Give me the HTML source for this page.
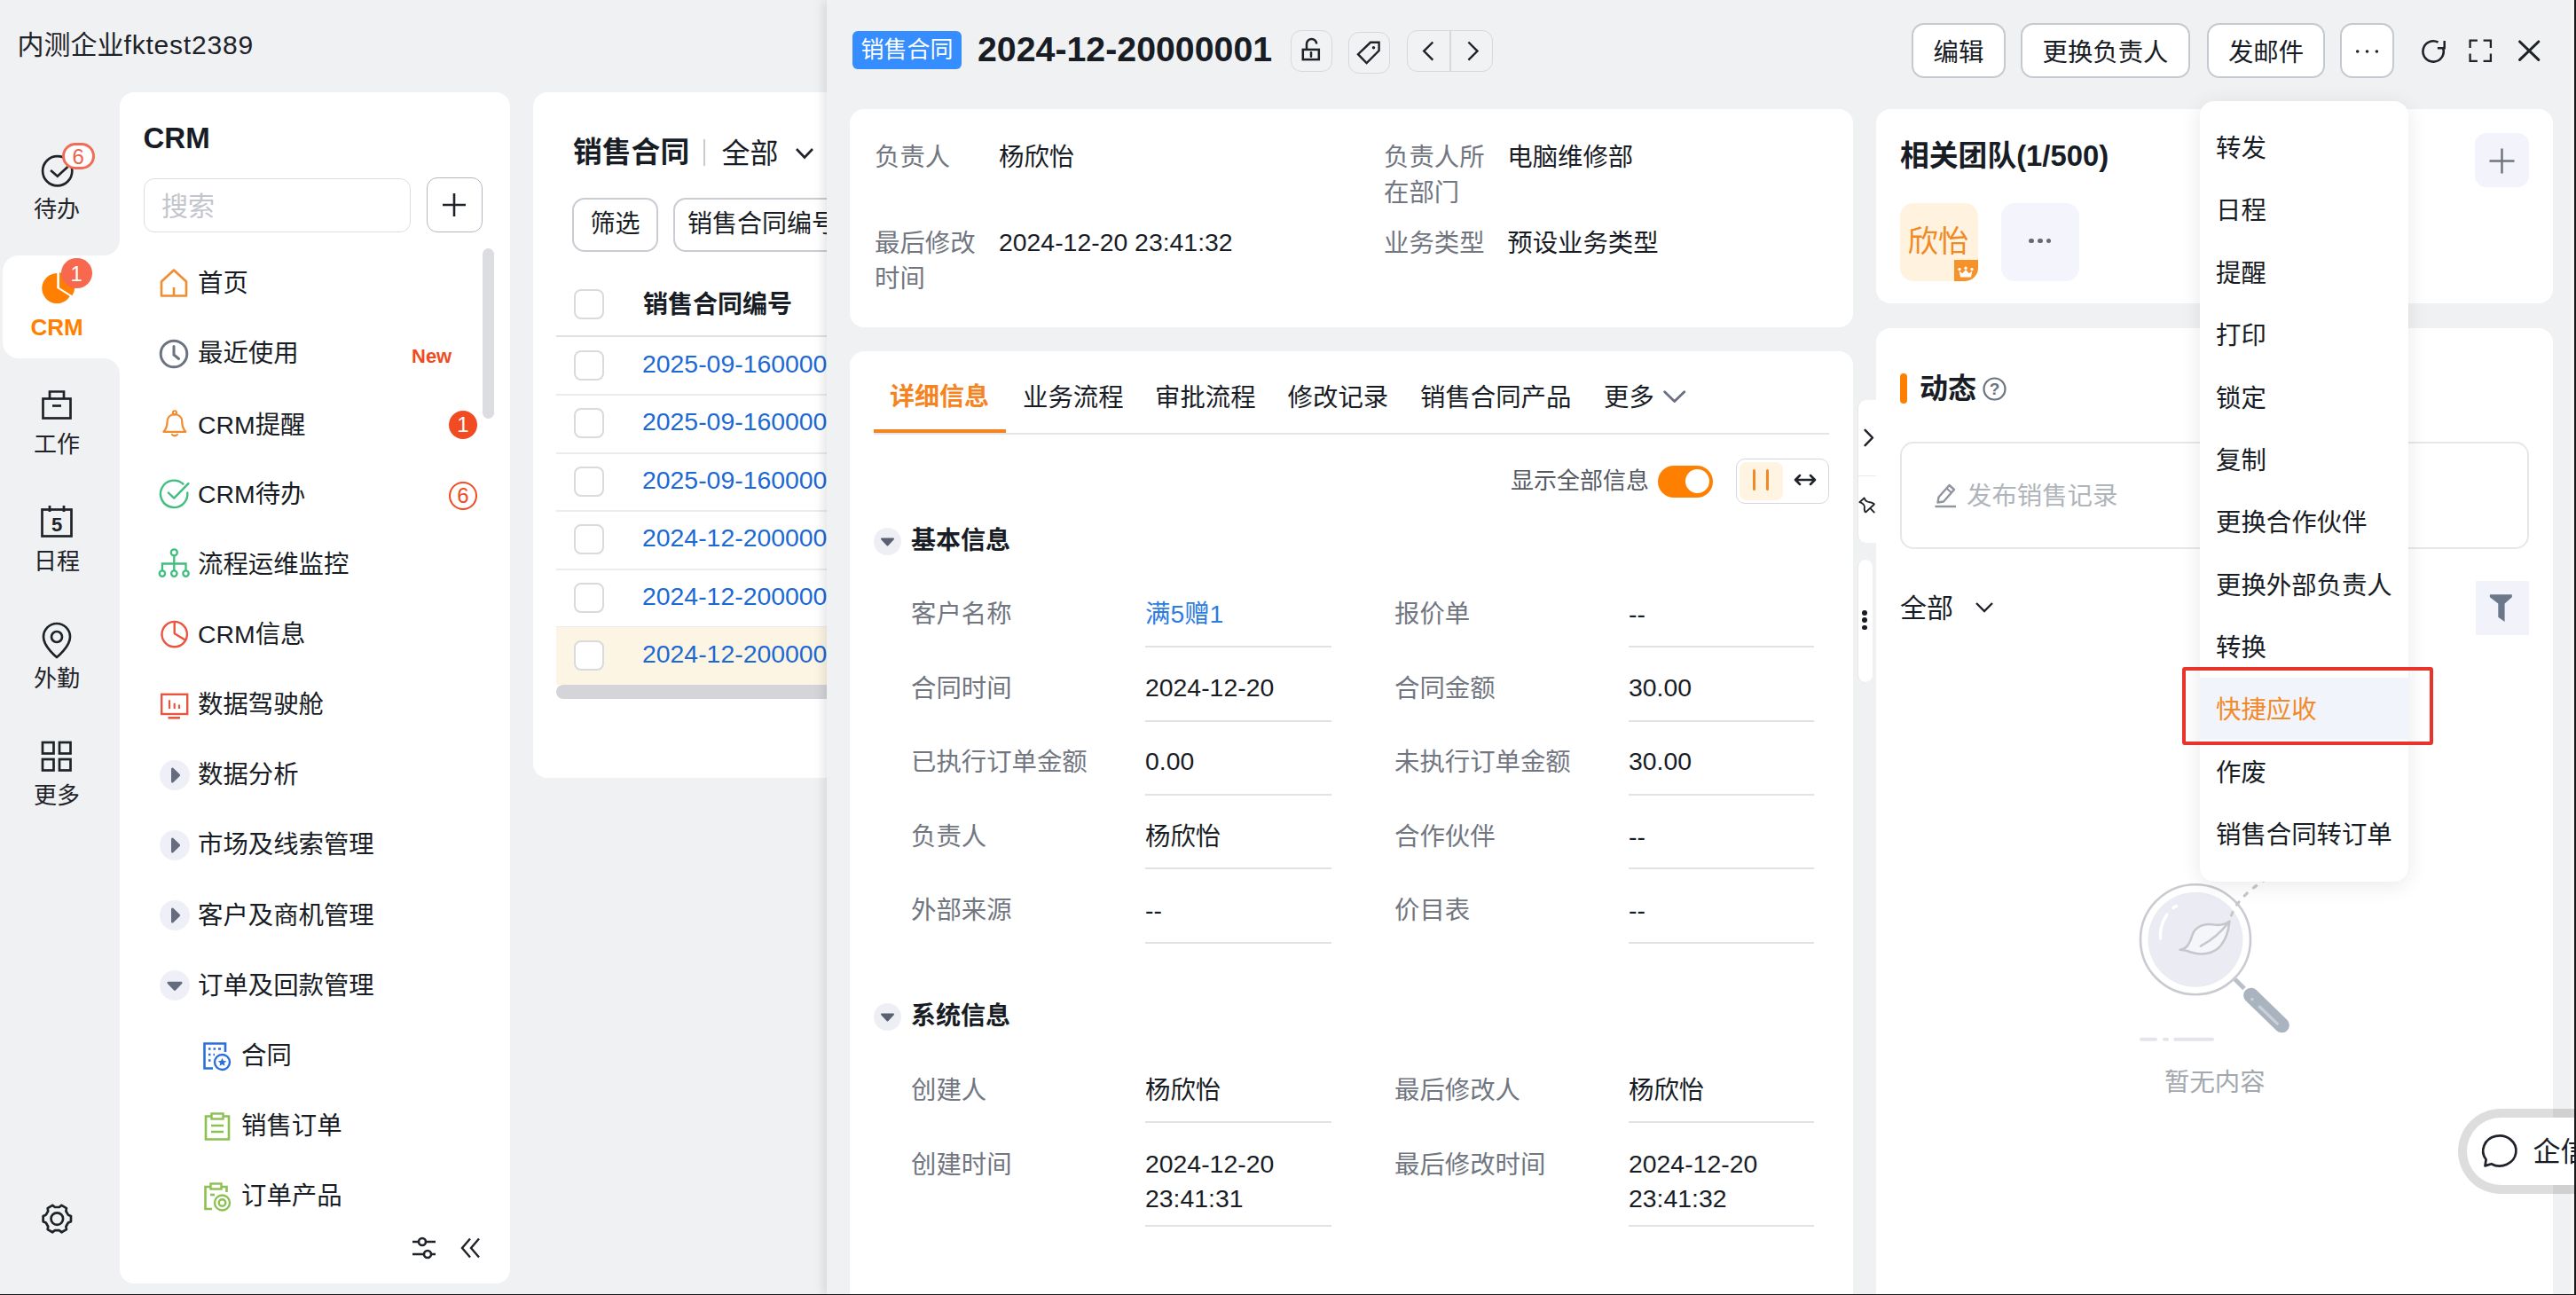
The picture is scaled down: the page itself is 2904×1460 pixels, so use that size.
<!DOCTYPE html><html lang="zh-CN"><head><meta charset="utf-8"><title>CRM</title><style>
*{box-sizing:border-box;margin:0;padding:0}
html,body{width:2904px;height:1460px;overflow:hidden}
body{position:relative;background:#f0f1f2;font-family:"Liberation Sans","Noto Sans CJK SC",sans-serif;color:#181c25;font-size:28px;line-height:40px}
.a{position:absolute}
.t{position:absolute;white-space:nowrap;line-height:40px;height:40px}
.b{font-weight:700}
.card{position:absolute;background:#fff;border-radius:16px}
.btn{position:absolute;border:2px solid #c9ccd2;border-radius:14px;background:#f6f7f9;text-align:center;white-space:nowrap}
svg{position:absolute;overflow:visible}
.cb{position:absolute;width:34px;height:34px;border:2px solid #d8dade;border-radius:8px;background:#fff}
.ul{position:absolute;height:2px;background:#e2e4e8}
.g{color:#868b95}
@media (max-width:1600px){html{zoom:.5}}
</style></head><body>
<div class="t " style="left:19.5px;top:31px;font-size:30px;color:#1f2329;">内测企业<span style="letter-spacing:0.8px">fktest2389</span></div>
<div class="a" style="left:3px;top:287.5px;width:160px;height:116px;background:#fff;border-radius:18px 0 0 18px"></div>
<div class="a" style="left:115px;top:267.5px;width:20px;height:20px;background:#fff"></div>
<div class="a" style="left:115px;top:267.5px;width:20px;height:20px;background:#f0f1f2;border-bottom-right-radius:18px"></div>
<div class="a" style="left:115px;top:403.5px;width:20px;height:20px;background:#fff"></div>
<div class="a" style="left:115px;top:403.5px;width:20px;height:20px;background:#f0f1f2;border-top-right-radius:18px"></div>
<svg style="left:44px;top:173px;" width="40" height="40" viewBox="0 0 40 40" fill="none"><circle cx="20.7" cy="19.7" r="16.6" stroke="#1f2329" stroke-width="2.7"/><path d="M13.1 19 L20.8 25.7 L32.4 14.9" stroke="#1f2329" stroke-width="2.7"/></svg>
<div class="a" style="left:69.5px;top:160.5px;width:37.5px;height:30.5px;border:3.3px solid #f26b57;border-radius:16px;background:#fff;color:#f0624c;font-size:24px;line-height:25px;text-align:center">6</div>
<div class="t " style="left:-86.0px;width:300px;text-align:center;top:216px;font-size:26px;color:#1f2329;">待办</div>
<svg style="left:44px;top:304px;" width="44" height="44" viewBox="0 0 44 44" fill="none"><path d="M20.3 21.1 L20.3 4.100000000000001 A17.0 17.0 0 1 0 34.72 30.11 Z" fill="#ff8000"/><path d="M23.0 20.200000000000003 L23.0 3.200000000000003 A17.0 17.0 0 0 1 37.42 29.21 Z" fill="#ff8000"/></svg>
<div class="a" style="left:69px;top:290.5px;width:34.6px;height:34.6px;border-radius:18px;background:#f8684e;color:#fff;font-size:24px;line-height:35px;text-align:center">1</div>
<div class="t b" style="left:-86.0px;width:300px;text-align:center;top:348.5px;font-size:26px;color:#ff8000;">CRM</div>
<svg style="left:44px;top:436px;" width="40" height="40" viewBox="0 0 40 40" fill="none"><rect x="4.5" y="13.5" width="31" height="22" stroke="#1f2329" stroke-width="2.7"/><path d="M12 13 V5.5 H28 V13" stroke="#1f2329" stroke-width="2.7"/><path d="M15 21.5 H25" stroke="#1f2329" stroke-width="2.7"/></svg>
<div class="t " style="left:-86.0px;width:300px;text-align:center;top:481px;font-size:26px;color:#1f2329;">工作</div>
<svg style="left:44px;top:568px;" width="40" height="40" viewBox="0 0 40 40" fill="none"><rect x="3.5" y="6.5" width="33" height="30" stroke="#1f2329" stroke-width="2.7"/><path d="M12 2 V9 M28 2 V9" stroke="#1f2329" stroke-width="2.7"/><text x="20" y="31" font-size="22" font-weight="700" text-anchor="middle" fill="#1f2329" font-family="Liberation Sans, sans-serif">5</text></svg>
<div class="t " style="left:-86.0px;width:300px;text-align:center;top:612.5px;font-size:26px;color:#1f2329;">日程</div>
<svg style="left:44px;top:700px;" width="40" height="44" viewBox="0 0 40 44" fill="none"><path d="M20 41 C20 41 35 29 35 18 A15 15 0 0 0 5 18 C5 29 20 41 20 41 Z" stroke="#1f2329" stroke-width="2.7" stroke-linejoin="round"/><circle cx="20" cy="18" r="6" stroke="#1f2329" stroke-width="2.7"/></svg>
<div class="t " style="left:-86.0px;width:300px;text-align:center;top:744.5px;font-size:26px;color:#1f2329;">外勤</div>
<svg style="left:46px;top:835px;" width="36" height="36" viewBox="0 0 36 36" fill="none"><rect x="2" y="2" width="12.5" height="12.5" stroke="#1f2329" stroke-width="2.7"/><rect x="21" y="2" width="12.5" height="12.5" stroke="#1f2329" stroke-width="2.7"/><rect x="2" y="21" width="12.5" height="12.5" stroke="#1f2329" stroke-width="2.7"/><rect x="21" y="21" width="12.5" height="12.5" stroke="#1f2329" stroke-width="2.7"/></svg>
<div class="t " style="left:-86.0px;width:300px;text-align:center;top:877px;font-size:26px;color:#1f2329;">更多</div>
<svg style="left:40px;top:1350px" width="50" height="50" viewBox="40 1350 50 50" fill="none" stroke="#1f2329" stroke-width="2.7"><path d="M76.84 1369.66 L79.98 1370.92 L79.98 1377.28 L76.84 1378.54 L74.41 1382.74 L74.89 1386.09 L69.39 1389.27 L66.73 1387.18 L61.87 1387.18 L59.21 1389.27 L53.71 1386.09 L54.19 1382.74 L51.76 1378.54 L48.62 1377.28 L48.62 1370.92 L51.76 1369.66 L54.19 1365.46 L53.71 1362.11 L59.21 1358.93 L61.87 1361.02 L66.73 1361.02 L69.39 1358.93 L74.89 1362.11 L74.41 1365.46Z" stroke-linejoin="round"/><circle cx="64.3" cy="1374.1" r="6.8"/></svg>
<div class="card" style="left:135px;top:104px;width:440px;height:1343px"></div>
<div class="t b" style="left:161.5px;top:136.3px;font-size:33px;color:#181c25;">CRM</div>
<div class="a" style="left:161.5px;top:201.3px;width:301px;height:60.3px;border:1.8px solid #dcdde1;border-radius:12px;background:#fff"></div>
<div class="t " style="left:182px;top:213px;font-size:30px;color:#c2c5cb;">搜索</div>
<div class="a" style="left:481px;top:200px;width:63px;height:62px;border:1.8px solid #b4b7c0;border-radius:12px;background:#fff"></div>
<svg style="left:498px;top:217px;" width="28" height="28" viewBox="0 0 28 28" fill="none"><path d="M14 1 V27 M1 14 H27" stroke="#1f2329" stroke-width="2.6"/></svg>
<div class="a" style="left:544px;top:280px;width:13px;height:192px;background:#dcdde1;border-radius:7px"></div>
<svg style="left:179px;top:302px;" width="34" height="34" viewBox="0 0 34 34" fill="none"><path d="M3 15.5 L17 2.5 L31 15.5 V31.5 H3 Z" stroke="#f28c2e" stroke-width="2.6" stroke-linejoin="round"/><path d="M17 22 V31" stroke="#f28c2e" stroke-width="2.6"/></svg>
<div class="t " style="left:223px;top:298.8px;font-size:28.4px;color:#181c25;">首页</div>
<svg style="left:179px;top:382px;" width="34" height="34" viewBox="0 0 34 34" fill="none"><circle cx="17" cy="17" r="14.8" stroke="#6b7380" stroke-width="3"/><path d="M17 8.5 V18 L22.5 22.5" stroke="#6b7380" stroke-width="3" stroke-linecap="round"/></svg>
<div class="t " style="left:223px;top:378.0px;font-size:28.4px;color:#181c25;">最近使用</div>
<svg style="left:179px;top:461px;" width="36" height="34" viewBox="0 0 36 34" fill="none"><circle cx="17.9" cy="4.3" r="2.1" stroke="#f28c2e" stroke-width="2"/><path d="M5.5 25.8 H30.3 C27.8 23 26.3 20 26.3 15 C26.3 9.5 22.8 6.2 17.9 6.2 C13 6.2 9.5 9.5 9.5 15 C9.5 20 8 23 5.5 25.8 Z" stroke="#f28c2e" stroke-width="2.3" stroke-linejoin="round"/><path d="M15 29 Q17.9 31.6 20.8 29" stroke="#f28c2e" stroke-width="2.3" stroke-linecap="round"/></svg>
<div class="t " style="left:223px;top:458.6px;font-size:28.4px;color:#181c25;">CRM提醒</div>
<svg style="left:179px;top:540px;" width="36" height="34" viewBox="0 0 36 34" fill="none"><path d="M27.4 5.6 A15.2 15.2 0 1 0 32.3 15.4" stroke="#3fbf7f" stroke-width="2.4" stroke-linecap="round"/><path d="M10.8 15.5 L17.2 21.7 L33.4 5.2" stroke="#3fbf7f" stroke-width="2.4" stroke-linecap="round" stroke-linejoin="round"/></svg>
<div class="t " style="left:223px;top:537.1000000000001px;font-size:28.4px;color:#181c25;">CRM待办</div>
<svg style="left:179px;top:619px;" width="36" height="34" viewBox="0 0 36 34" fill="none"><circle cx="17.3" cy="3.9" r="3.5" stroke="#3fbf7f" stroke-width="2.3"/><circle cx="3.9" cy="27.6" r="3.2" stroke="#3fbf7f" stroke-width="2.3"/><circle cx="17.3" cy="27.6" r="3.2" stroke="#3fbf7f" stroke-width="2.3"/><circle cx="30.5" cy="27.6" r="3.2" stroke="#3fbf7f" stroke-width="2.3"/><path d="M17.3 7.6 V24.2 M3.9 24.2 V16.5 H30.5 V24.2" stroke="#3fbf7f" stroke-width="2.3"/></svg>
<div class="t " style="left:223px;top:615.6px;font-size:28.4px;color:#181c25;">流程运维监控</div>
<svg style="left:179px;top:698px;" width="36" height="34" viewBox="0 0 36 34" fill="none"><circle cx="17.7" cy="17.1" r="14.2" stroke="#ea553f" stroke-width="2.4"/><path d="M17.7 3 V16.2 L29.8 23.6" stroke="#ea553f" stroke-width="2.4" stroke-linejoin="round"/></svg>
<div class="t " style="left:223px;top:694.8px;font-size:28.4px;color:#181c25;">CRM信息</div>
<svg style="left:179px;top:778px;" width="36" height="34" viewBox="0 0 36 34" fill="none"><rect x="3.2" y="4.8" width="29" height="22.2" stroke="#ea553f" stroke-width="2.4"/><path d="M12 11.2 V21 M17.7 14.8 V21 M23 16.6 V21" stroke="#ea553f" stroke-width="2.2"/><path d="M10.5 31.3 H24" stroke="#ea553f" stroke-width="2.6"/></svg>
<div class="t " style="left:223px;top:774.0px;font-size:28.4px;color:#181c25;">数据驾驶舱</div>
<div class="a" style="left:180px;top:856.7px;width:34px;height:34px;background:#eff0f7;border-radius:17px"></div>
<svg style="left:180px;top:856.7px;" width="34" height="34" viewBox="0 0 34 34" fill="none"><path d="M14.3 9.8 V24.2 L21.8 17 Z" fill="#666c80" stroke="#666c80" stroke-width="2.6" stroke-linejoin="round"/></svg>
<div class="t " style="left:223px;top:853.2px;font-size:28.4px;color:#181c25;">数据分析</div>
<div class="a" style="left:180px;top:935.9000000000001px;width:34px;height:34px;background:#eff0f7;border-radius:17px"></div>
<svg style="left:180px;top:935.9000000000001px;" width="34" height="34" viewBox="0 0 34 34" fill="none"><path d="M14.3 9.8 V24.2 L21.8 17 Z" fill="#666c80" stroke="#666c80" stroke-width="2.6" stroke-linejoin="round"/></svg>
<div class="t " style="left:223px;top:932.4000000000001px;font-size:28.4px;color:#181c25;">市场及线索管理</div>
<div class="a" style="left:180px;top:1015.1000000000001px;width:34px;height:34px;background:#eff0f7;border-radius:17px"></div>
<svg style="left:180px;top:1015.1000000000001px;" width="34" height="34" viewBox="0 0 34 34" fill="none"><path d="M14.3 9.8 V24.2 L21.8 17 Z" fill="#666c80" stroke="#666c80" stroke-width="2.6" stroke-linejoin="round"/></svg>
<div class="t " style="left:223px;top:1011.6000000000001px;font-size:28.4px;color:#181c25;">客户及商机管理</div>
<div class="a" style="left:180px;top:1094.3px;width:34px;height:34px;background:#eff0f7;border-radius:17px"></div>
<svg style="left:180px;top:1094.3px;" width="34" height="34" viewBox="0 0 34 34" fill="none"><path d="M9.8 14 H24.2 L17 21.5 Z" fill="#666c80" stroke="#666c80" stroke-width="2.6" stroke-linejoin="round"/></svg>
<div class="t " style="left:223px;top:1090.8px;font-size:28.4px;color:#181c25;">订单及回款管理</div>
<svg style="left:228px;top:1174px;" width="34" height="34" viewBox="0 0 34 34" fill="none"><path d="M26 12 V2.5 H2.5 V30.5 H12" stroke="#2a6fdb" stroke-width="2.6"/><path d="M7 8.5 H9.5 M12.5 8.5 H15 M18 8.5 H21 M7 15 H9.5 M12.5 15 H14 M7 21.5 H9.5" stroke="#2a6fdb" stroke-width="2.6"/><circle cx="22.5" cy="23.5" r="8.5" stroke="#2a6fdb" stroke-width="2.4"/><path d="M22.5 18.8 L23.9 22 L27.3 22.3 L24.7 24.5 L25.5 27.8 L22.5 26 L19.5 27.8 L20.3 24.5 L17.7 22.3 L21.1 22 Z" fill="#2a6fdb"/></svg>
<div class="t " style="left:272px;top:1170.0px;font-size:28.4px;color:#181c25;">合同</div>
<svg style="left:228px;top:1253px;" width="34" height="34" viewBox="0 0 34 34" fill="none"><path d="M10 5.5 H4 V31.5 H30 V5.5 H24" stroke="#8cc152" stroke-width="2.6"/><rect x="10.5" y="2.5" width="13" height="6" stroke="#8cc152" stroke-width="2.4"/><path d="M10 16 H24 M10 23 H24" stroke="#8cc152" stroke-width="2.6"/></svg>
<div class="t " style="left:272px;top:1249.2px;font-size:28.4px;color:#181c25;">销售订单</div>
<svg style="left:228px;top:1332px;" width="34" height="34" viewBox="0 0 34 34" fill="none"><path d="M9 6 H3.5 V31 H11" stroke="#8cc152" stroke-width="2.6"/><path d="M22 6 H27.5 V12" stroke="#8cc152" stroke-width="2.6"/><rect x="9.5" y="2.5" width="12" height="6" stroke="#8cc152" stroke-width="2.4"/><path d="M9 15 H14" stroke="#8cc152" stroke-width="2.6"/><circle cx="22.5" cy="24" r="8.5" stroke="#8cc152" stroke-width="2.4"/><circle cx="22.5" cy="24" r="3.8" stroke="#8cc152" stroke-width="2.4"/></svg>
<div class="t " style="left:272px;top:1328.4px;font-size:28.4px;color:#181c25;">订单产品</div>
<div class="t b" style="left:464px;top:381.5px;font-size:22px;color:#f04b22;">New</div>
<div class="a" style="left:506px;top:463px;width:32px;height:32px;border-radius:16px;background:#f04b22;color:#fff;font-size:24px;line-height:32px;text-align:center">1</div>
<div class="a" style="left:506px;top:543px;width:32px;height:32px;border-radius:16px;border:2.5px solid #f04b22;color:#f04b22;font-size:24px;line-height:27px;text-align:center">6</div>
<svg style="left:464px;top:1393px;" width="28" height="28" viewBox="0 0 28 28" fill="none"><path d="M1 7 H8 M16 7 H27 M1 21 H14 M22 21 H27" stroke="#1f2329" stroke-width="2.6"/><circle cx="12" cy="7" r="4" stroke="#1f2329" stroke-width="2.6"/><circle cx="18" cy="21" r="4" stroke="#1f2329" stroke-width="2.6"/></svg>
<svg style="left:519px;top:1395px;" width="24" height="24" viewBox="0 0 24 24" fill="none"><path d="M11 1.5 L2 12 L11 22.5 M21 1.5 L12 12 L21 22.5" stroke="#1f2329" stroke-width="2.4"/></svg>
<div class="card" style="left:601px;top:104px;width:700px;height:773px"></div>
<div class="t b" style="left:646px;top:151.5px;font-size:32.8px;color:#181c25;">销售合同</div>
<div class="a" style="left:793px;top:157px;width:2px;height:30px;background:#c8cbd0"></div>
<div class="t " style="left:813.5px;top:153.3px;font-size:32px;color:#181c25;">全部</div>
<svg style="left:896px;top:166px;" width="22" height="14" viewBox="0 0 22 14" fill="none"><path d="M2 2 L11 11.5 L20 2" stroke="#1f2329" stroke-width="2.6"/></svg>
<div class="btn" style="left:645px;top:223px;width:97px;height:61px;line-height:55px;background:#fff">筛选</div>
<div class="btn" style="left:759px;top:223px;width:300px;height:61px;line-height:55px;background:#fff;text-align:left;padding-left:14px">销售合同编号</div>
<div class="cb" style="left:647px;top:326px"></div>
<div class="t b" style="left:725px;top:323.5px;font-size:28px;color:#181c25;">销售合同编号</div>
<div class="a" style="left:627px;top:378px;width:400px;height:2px;background:#dfe1e5"></div>
<div class="a" style="left:627px;top:444px;width:400px;height:2px;background:#ebecef"></div>
<div class="cb" style="left:647px;top:395px"></div>
<div class="t " style="left:724px;top:390.0px;font-size:28.4px;color:#1c69d4;">2025-09-160000</div>
<div class="a" style="left:627px;top:510px;width:400px;height:2px;background:#ebecef"></div>
<div class="cb" style="left:647px;top:460px"></div>
<div class="t " style="left:724px;top:455.45px;font-size:28.4px;color:#1c69d4;">2025-09-160000</div>
<div class="a" style="left:627px;top:575px;width:400px;height:2px;background:#ebecef"></div>
<div class="cb" style="left:647px;top:526px"></div>
<div class="t " style="left:724px;top:520.9px;font-size:28.4px;color:#1c69d4;">2025-09-160000</div>
<div class="a" style="left:627px;top:641px;width:400px;height:2px;background:#ebecef"></div>
<div class="cb" style="left:647px;top:591px"></div>
<div class="t " style="left:724px;top:586.35px;font-size:28.4px;color:#1c69d4;">2024-12-200000</div>
<div class="a" style="left:627px;top:706px;width:400px;height:2px;background:#ebecef"></div>
<div class="cb" style="left:647px;top:657px"></div>
<div class="t " style="left:724px;top:651.8px;font-size:28.4px;color:#1c69d4;">2024-12-200000</div>
<div class="a" style="left:627px;top:707px;width:400px;height:65px;background:#fdf5e4"></div>
<div class="cb" style="left:647px;top:722px"></div>
<div class="t " style="left:724px;top:717.25px;font-size:28.4px;color:#1c69d4;">2024-12-200000</div>
<div class="a" style="left:627px;top:772px;width:400px;height:16px;background:#d3d5d9;border-radius:8px 0 0 8px"></div>
<div class="a" style="left:932px;top:0;width:1972px;height:1460px;background:#f0f1f2;box-shadow:-3px 0 12px rgba(0,0,0,0.12)"></div>
<div class="a" style="left:961px;top:35px;width:123px;height:43px;border-radius:6px;background:#368dff;color:#fff;font-size:26px;line-height:42px;text-align:center;white-space:nowrap">销售合同</div>
<div class="t b" style="left:1102px;top:35.3px;font-size:39.3px;color:#181c25;">2024-12-20000001</div>
<div class="a" style="left:1454.5px;top:33.5px;width:47px;height:47px;border:1.6px solid #d6d8dc;border-radius:12px;background:#f1f2f4"></div>
<div class="a" style="left:1519.5px;top:35.5px;width:47px;height:47px;border:1.6px solid #d6d8dc;border-radius:12px;background:#f1f2f4"></div>
<div class="a" style="left:1585.7px;top:33.5px;width:97.6px;height:47px;border:1.6px solid #d6d8dc;border-radius:12px;background:#f1f2f4"></div>
<div class="a" style="left:1634.2px;top:34.5px;width:1.6px;height:45px;background:#d6d8dc"></div>
<svg style="left:1440px;top:20px" width="260" height="80" viewBox="1440 20 260 80" fill="none" stroke="#1f2329" stroke-width="2.5"><rect x="1468.8" y="55.9" width="18" height="11.2"/><path d="M1473 55 V49.5 A5.6 5.6 0 0 1 1484.2 49.5" /><path d="M1478 59.2 V63.8" stroke-linecap="round"/><path d="M1545 47.8 H1554.6 V57 L1540.6 71 L1531 61.2 Z" stroke-width="2.4"/><circle cx="1548.5" cy="53.7" r="1.7" fill="#1f2329" stroke="none"/><path d="M1615.3 47.5 L1605.2 57.6 L1615.3 67.7" stroke-width="2.4"/><path d="M1655.4 47.5 L1665.5 57.6 L1655.4 67.7" stroke-width="2.4"/></svg>
<div class="btn" style="left:2155px;top:26px;width:106px;height:62px;line-height:62px;font-size:28.4px;color:#181c25;background:#fff;border-color:#c6c9cf">编辑</div>
<div class="btn" style="left:2278px;top:26px;width:191px;height:62px;line-height:62px;font-size:28.4px;color:#181c25;background:#fff;border-color:#c6c9cf">更换负责人</div>
<div class="btn" style="left:2488px;top:26px;width:133px;height:62px;line-height:62px;font-size:28.4px;color:#181c25;background:#fff;border-color:#c6c9cf">发邮件</div>
<div class="btn" style="left:2638px;top:26px;width:61px;height:62px;line-height:62px;font-size:28.4px;color:#181c25;background:#fff;border-color:#c6c9cf"></div>
<svg style="left:2655px;top:55.4px;" width="28" height="6" viewBox="0 0 28 6" fill="none"><circle cx="2.7" cy="3" r="1.8" fill="#1f2329"/><circle cx="13.5" cy="3" r="1.8" fill="#1f2329"/><circle cx="24.4" cy="3" r="1.8" fill="#1f2329"/></svg>
<svg style="left:2720px;top:30px" width="160" height="60" viewBox="2720 30 160 60" fill="none" stroke="#1f2329" stroke-width="2.7"><path d="M2754.2 54.4 A11.65 11.65 0 1 1 2748.6 47.7" stroke-width="2.6"/><path d="M2755.7 46 V54.3 H2747.9" stroke-width="2.5"/><path d="M2784.6 53.9 V45.6 H2792.9 M2799.6 45.6 H2807.9 V53.9 M2807.9 60.6 V68.9 H2799.6 M2792.9 68.9 H2784.6 V60.6" stroke-width="2.3"/><path d="M2840.6 47 L2861.8 67.4 M2861.8 47 L2840.6 67.4" stroke-width="3.1" stroke-linecap="round"/></svg>
<div class="card" style="left:958px;top:123px;width:1131px;height:246px"></div>
<div class="t " style="left:986px;top:157px;font-size:28.4px;color:#717680;">负责人</div>
<div class="t " style="left:1126px;top:157px;font-size:28.4px;">杨欣怡</div>
<div class="t " style="left:1560px;top:157px;font-size:28.4px;color:#717680;">负责人所</div>
<div class="t " style="left:1560px;top:197px;font-size:28.4px;color:#717680;">在部门</div>
<div class="t " style="left:1699.3px;top:157px;font-size:28.4px;">电脑维修部</div>
<div class="t " style="left:986px;top:254px;font-size:28.4px;color:#717680;">最后修改</div>
<div class="t " style="left:986px;top:294px;font-size:28.4px;color:#717680;">时间</div>
<div class="t " style="left:1126px;top:253.39999999999998px;font-size:28.4px;">2024-12-20 23:41:32</div>
<div class="t " style="left:1560px;top:254px;font-size:28.4px;color:#717680;">业务类型</div>
<div class="t " style="left:1699.3px;top:254px;font-size:28.4px;">预设业务类型</div>
<div class="card" style="left:958px;top:396px;width:1131px;height:1200px"></div>
<div class="t b" style="left:1003px;top:427.5px;font-size:28px;color:#f5831f;">详细信息</div>
<div class="a" style="left:985px;top:484px;width:149px;height:5px;background:#f5831f"></div>
<div class="a" style="left:985px;top:488px;width:1077px;height:2px;background:#e3e5e9"></div>
<div class="t " style="left:1153px;top:428px;font-size:28.4px;">业务流程</div>
<div class="t " style="left:1302px;top:428px;font-size:28.4px;">审批流程</div>
<div class="t " style="left:1451.6px;top:428px;font-size:28.4px;">修改记录</div>
<div class="t " style="left:1601px;top:428px;font-size:28.4px;">销售合同产品</div>
<div class="t " style="left:1808px;top:428px;font-size:28.4px;">更多</div>
<svg style="left:1875px;top:439.5px;" width="26" height="16" viewBox="0 0 26 16" fill="none"><path d="M1.6 1.8 L12.7 12.6 L23.8 1.8" stroke="#6a6f85" stroke-width="2.8" stroke-linecap="round" stroke-linejoin="round"/></svg>
<div class="t " style="left:1703px;top:522px;font-size:26px;color:#545861;">显示全部信息</div>
<div class="a" style="left:1869px;top:525px;width:62px;height:36px;border-radius:18px;background:#ff8000"></div>
<div class="a" style="left:1899.6px;top:529.4px;width:27px;height:27px;border-radius:14px;background:#fff"></div>
<div class="a" style="left:1957.3px;top:517.4px;width:104.5px;height:51px;border:1.6px solid #d6d8e0;border-radius:10px;background:#fff"></div>
<div class="a" style="left:1961.4px;top:521.2px;width:48.4px;height:43.3px;background:#fff3e2;border-radius:8px"></div>
<div class="a" style="left:1976.4px;top:529px;width:3.1px;height:24px;background:#f08a24;border-radius:1.5px"></div>
<div class="a" style="left:1991.2px;top:529px;width:3.1px;height:24px;background:#f08a24;border-radius:1.5px"></div>
<svg style="left:2021px;top:532px;" width="28" height="18" viewBox="0 0 28 18" fill="none"><path d="M3 9 H25 M8 4 L3 9 L8 14 M20 4 L25 9 L20 14" stroke="#1f2329" stroke-width="2.5" stroke-linecap="round" stroke-linejoin="round"/></svg>
<div class="a" style="left:985px;top:594.5px;width:31px;height:31px;background:#edeff4;border-radius:16px"></div>
<svg style="left:985px;top:594.5px;" width="31" height="31" viewBox="0 0 31 31" fill="none"><path d="M9 12.5 H22 L15.5 19.5 Z" fill="#5a6172" stroke="#5a6172" stroke-width="2" stroke-linejoin="round"/></svg>
<div class="t b" style="left:1027px;top:590.0px;font-size:28px;color:#181c25;">基本信息</div>
<div class="t " style="left:1027px;top:672.0px;font-size:28.4px;color:#717680;">客户名称</div>
<div class="t " style="left:1291px;top:672.0px;font-size:28.4px;"><span style="color:#2f7de0">满5赠1</span></div>
<div class="t " style="left:1572px;top:672.0px;font-size:28.4px;color:#717680;">报价单</div>
<div class="t " style="left:1836px;top:672.0px;font-size:28.4px;">--</div>
<div class="a" style="left:1291px;top:728px;width:210px;height:2px;background:#e0e2e5"></div>
<div class="a" style="left:1836px;top:728px;width:209px;height:2px;background:#e0e2e5"></div>
<div class="t " style="left:1027px;top:755.5px;font-size:28.4px;color:#717680;">合同时间</div>
<div class="t " style="left:1291px;top:754.5px;font-size:28.4px;">2024-12-20</div>
<div class="t " style="left:1572px;top:755.5px;font-size:28.4px;color:#717680;">合同金额</div>
<div class="t " style="left:1836px;top:754.5px;font-size:28.4px;">30.00</div>
<div class="a" style="left:1291px;top:812px;width:210px;height:2px;background:#e0e2e5"></div>
<div class="a" style="left:1836px;top:812px;width:209px;height:2px;background:#e0e2e5"></div>
<div class="t " style="left:1027px;top:839.0px;font-size:28.4px;color:#717680;">已执行订单金额</div>
<div class="t " style="left:1291px;top:838.0px;font-size:28.4px;">0.00</div>
<div class="t " style="left:1572px;top:839.0px;font-size:28.4px;color:#717680;">未执行订单金额</div>
<div class="t " style="left:1836px;top:838.0px;font-size:28.4px;">30.00</div>
<div class="a" style="left:1291px;top:895px;width:210px;height:2px;background:#e0e2e5"></div>
<div class="a" style="left:1836px;top:895px;width:209px;height:2px;background:#e0e2e5"></div>
<div class="t " style="left:1027px;top:922.5px;font-size:28.4px;color:#717680;">负责人</div>
<div class="t " style="left:1291px;top:922.5px;font-size:28.4px;">杨欣怡</div>
<div class="t " style="left:1572px;top:922.5px;font-size:28.4px;color:#717680;">合作伙伴</div>
<div class="t " style="left:1836px;top:922.5px;font-size:28.4px;">--</div>
<div class="a" style="left:1291px;top:978px;width:210px;height:2px;background:#e0e2e5"></div>
<div class="a" style="left:1836px;top:978px;width:209px;height:2px;background:#e0e2e5"></div>
<div class="t " style="left:1027px;top:1006.0px;font-size:28.4px;color:#717680;">外部来源</div>
<div class="t " style="left:1291px;top:1006.0px;font-size:28.4px;">--</div>
<div class="t " style="left:1572px;top:1006.0px;font-size:28.4px;color:#717680;">价目表</div>
<div class="t " style="left:1836px;top:1006.0px;font-size:28.4px;">--</div>
<div class="a" style="left:1291px;top:1062px;width:210px;height:2px;background:#e0e2e5"></div>
<div class="a" style="left:1836px;top:1062px;width:209px;height:2px;background:#e0e2e5"></div>
<div class="a" style="left:985px;top:1130.5px;width:31px;height:31px;background:#edeff4;border-radius:16px"></div>
<svg style="left:985px;top:1130.5px;" width="31" height="31" viewBox="0 0 31 31" fill="none"><path d="M9 12.5 H22 L15.5 19.5 Z" fill="#5a6172" stroke="#5a6172" stroke-width="2" stroke-linejoin="round"/></svg>
<div class="t b" style="left:1027px;top:1126.0px;font-size:28px;color:#181c25;">系统信息</div>
<div class="t " style="left:1027px;top:1209px;font-size:28.4px;color:#717680;">创建人</div>
<div class="t " style="left:1291px;top:1209px;font-size:28.4px;">杨欣怡</div>
<div class="t " style="left:1572px;top:1209px;font-size:28.4px;color:#717680;">最后修改人</div>
<div class="t " style="left:1836px;top:1209px;font-size:28.4px;">杨欣怡</div>
<div class="a" style="left:1291px;top:1264px;width:210px;height:2px;background:#e0e2e5"></div>
<div class="a" style="left:1836px;top:1264px;width:209px;height:2px;background:#e0e2e5"></div>
<div class="t " style="left:1027px;top:1293px;font-size:28.4px;color:#717680;">创建时间</div>
<div class="t " style="left:1291px;top:1291.8px;font-size:28.4px;">2024-12-20</div>
<div class="t " style="left:1291px;top:1330.7px;font-size:28.4px;">23:41:31</div>
<div class="t " style="left:1572px;top:1293px;font-size:28.4px;color:#717680;">最后修改时间</div>
<div class="t " style="left:1836px;top:1291.8px;font-size:28.4px;">2024-12-20</div>
<div class="t " style="left:1836px;top:1330.7px;font-size:28.4px;">23:41:32</div>
<div class="a" style="left:1291px;top:1381px;width:210px;height:2px;background:#e0e2e5"></div>
<div class="a" style="left:1836px;top:1381px;width:209px;height:2px;background:#e0e2e5"></div>
<div class="a" style="left:2093.5px;top:451px;width:21.5px;height:160.5px;background:#fff;border-radius:9px 0 0 9px;border-left:1px solid #e6e7ea"></div>
<div class="a" style="left:2094px;top:535.5px;width:21px;height:1.5px;background:#e9eaed"></div>
<svg style="left:2100px;top:483px;" width="14" height="21" viewBox="0 0 14 21" fill="none"><path d="M2.6 1.8 L11 10.5 L2.6 19.2" stroke="#1f2329" stroke-width="2.5" stroke-linecap="round" stroke-linejoin="round"/></svg>
<svg style="left:2095px;top:560px;" width="20" height="20" viewBox="0 0 20 20" fill="none"><path d="M6.6 1.4 L1.4 6.2 C3 6.8 4 7.2 4.7 7.8 C6.5 9.2 7.2 10.5 7 11.6 C6.7 13 6.6 13.6 6.8 14.3 L7.3 16.6 Q7.8 17.8 8.9 16.9 L17.4 9 Q18.4 8 17 7.6 C15.5 7 15 6.7 13.9 6.4 C12.5 6.2 11.5 6.3 10.1 5.5 C8.8 4.8 8 4.2 7.6 3.5 Z" stroke="#1f2329" stroke-width="1.9" stroke-linejoin="round"/><path d="M13.7 13.4 L17.8 17.6" stroke="#1f2329" stroke-width="1.9" stroke-linecap="round"/></svg>
<div class="a" style="left:2093.5px;top:630.5px;width:17px;height:138px;background:#fff;border-radius:8.5px;border-left:1px solid #e6e7ea"></div>
<div class="a" style="left:2099.4px;top:687.9px;width:5.8px;height:5.8px;background:#181c25;border-radius:3px"></div>
<div class="a" style="left:2099.4px;top:696.3000000000001px;width:5.8px;height:5.8px;background:#181c25;border-radius:3px"></div>
<div class="a" style="left:2099.4px;top:704.7px;width:5.8px;height:5.8px;background:#181c25;border-radius:3px"></div>
<div class="card" style="left:2115px;top:123px;width:763px;height:219px"></div>
<div class="t b" style="left:2142px;top:156.0px;font-size:32.8px;color:#181c25;">相关团队(1/500)</div>
<div class="a" style="left:2790.4px;top:150.2px;width:60.2px;height:60.7px;background:#f2f3fb;border-radius:13px"></div>
<svg style="left:2806px;top:166.5px;" width="29" height="29" viewBox="0 0 29 29" fill="none"><path d="M14.5 0.5 V28.5 M0.5 14.5 H28.5" stroke="#70757f" stroke-width="2.5"/></svg>
<div class="a" style="left:2142.4px;top:229px;width:88px;height:87.5px;background:#fff3e0;border-radius:15px"></div>
<div class="t " style="left:2150.6px;top:252.39999999999998px;font-size:34.5px;color:#f08a24;">欣怡</div>
<div class="a" style="left:2203px;top:293px;width:27.4px;height:23.5px;background:#f5922a;border-radius:0 0 15px 0"></div>
<svg style="left:2205px;top:299px;" width="22" height="16" viewBox="0 0 22 16" fill="none"><circle cx="4" cy="4.6" r="1.7" fill="#fff"/><circle cx="11" cy="3.2" r="1.7" fill="#fff"/><circle cx="18" cy="4.6" r="1.7" fill="#fff"/><path d="M3.6 6.5 L7.2 9.2 L11 5 L14.8 9.2 L18.4 6.5 L17 13.6 H5 Z" fill="#fff"/></svg>
<div class="a" style="left:2256px;top:229px;width:88px;height:87.5px;background:#f4f5fc;border-radius:15px"></div>
<div class="a" style="left:2287.4px;top:268.70000000000005px;width:5.8px;height:5.8px;background:#666a73;border-radius:3px"></div>
<div class="a" style="left:2297.1px;top:268.70000000000005px;width:5.8px;height:5.8px;background:#666a73;border-radius:3px"></div>
<div class="a" style="left:2306.6px;top:268.70000000000005px;width:5.8px;height:5.8px;background:#666a73;border-radius:3px"></div>
<div class="card" style="left:2115px;top:370px;width:763px;height:1200px"></div>
<div class="a" style="left:2142px;top:421px;width:8px;height:34px;background:#ff8000;border-radius:4px"></div>
<div class="t b" style="left:2164px;top:418.0px;font-size:32px;color:#181c25;">动态</div>
<svg style="left:2235px;top:425px;" width="27" height="27" viewBox="0 0 27 27" fill="none"><circle cx="13.5" cy="13.5" r="12" stroke="#6b7380" stroke-width="2.2"/><text x="13.5" y="20.3" font-size="19" font-weight="700" text-anchor="middle" fill="#6b7380" font-family="Liberation Sans, sans-serif">?</text></svg>
<div class="a" style="left:2142px;top:498px;width:709px;height:121px;border:2px solid #e5e7eb;border-radius:15px;background:#fff"></div>
<svg style="left:2179px;top:543px;" width="28" height="30" viewBox="0 0 28 30" fill="none"><path d="M6.5 17.5 L18.5 4 L24 9 L12 22.5 L5.5 23.5 Z" stroke="#8f949d" stroke-width="2.4" stroke-linejoin="round"/><path d="M15.5 7.5 L21 12.5" stroke="#8f949d" stroke-width="2.2"/><path d="M2.5 28 H26" stroke="#8f949d" stroke-width="2.4"/></svg>
<div class="t " style="left:2217px;top:539px;font-size:28.4px;color:#b0b4bb;">发布销售记录</div>
<div class="t " style="left:2142px;top:665.5px;font-size:30px;color:#181c25;">全部</div>
<svg style="left:2226px;top:678px;" width="22" height="14" viewBox="0 0 22 14" fill="none"><path d="M2 2 L11 11 L20 2" stroke="#1f2329" stroke-width="2.4"/></svg>
<div class="a" style="left:2790.5px;top:655px;width:60px;height:61px;background:#f2f3fa"></div>
<svg style="left:2790.5px;top:655px;" width="60" height="61" viewBox="0 0 60 61" fill="none"><path d="M15.9 15.3 H40.8 V18.3 L32.6 25.5 V46 L25.3 40.8 V25.5 L15.9 18.3 Z" fill="#6b788a"/></svg>
<svg style="left:2400px;top:985px;" width="200" height="200" viewBox="0 0 200 200" fill="none">
<circle cx="75" cy="74.2" r="62" fill="#fff" stroke="#c9cbd1" stroke-width="2.6"/>
<circle cx="75" cy="74.2" r="53.5" fill="#ebecf3"/>
<path d="M35.6 73 A41 41 0 0 1 43 46" stroke="#fff" stroke-width="3.4" stroke-linecap="round"/>
<path d="M50 38.5 L53.5 36.5" stroke="#fff" stroke-width="3.4" stroke-linecap="round"/>
<path d="M57.6 85.8 C65 85 68.5 79 71.5 69 C75 59.5 85 55.5 96 57.5 C103 58.5 108.5 57.5 113.3 53.8 C112.5 63 110 72.5 104 80.5 C96 90.5 82 92.5 70 88.5 C65.5 86.8 62 86 57.6 85.8 Z" fill="#f5f6f9" stroke="#c5c7cd" stroke-width="2.6" stroke-linejoin="round"/>
<path d="M80.8 81.6 C92 76 104 66 113.3 53.8" stroke="#c5c7cd" stroke-width="2.6" stroke-linecap="round"/>
<path d="M115.5 47 Q123 26 152 8" stroke="#c5c7cd" stroke-width="3.2" stroke-dasharray="4 9.5" stroke-linecap="round"/>
<path d="M119.5 119 L130 129.5" stroke="#b9c0c9" stroke-width="5"/>
<path d="M137.6 137.2 L172.4 170.8" stroke="#a9b4c0" stroke-width="17" stroke-linecap="round"/>
<path d="M147.3 150 L167.3 169.2" stroke="#c9d0d8" stroke-width="3.2" stroke-linecap="round"/>
<circle cx="138.9" cy="141.6" r="1.8" fill="#c9d0d8"/>
<path d="M14 186.7 H30 M40 186.7 H43 M52.2 186.7 H94" stroke="#e4e5ea" stroke-width="4" stroke-linecap="round"/>
</svg>
<div class="t " style="left:2440px;top:1200px;font-size:28.4px;color:#a3a7ae;">暂无内容</div>
<div class="a" style="left:2897.6px;top:0px;width:5px;height:1460px;background:#f6f6f7"></div>
<div class="a" style="left:2771px;top:1250px;width:200px;height:96px;border:10.7px solid rgba(0,0,0,0.135);border-radius:48px;background:#fff;background-clip:padding-box"></div>
<svg style="left:2797px;top:1277px;" width="42" height="40" viewBox="0 0 42 40" fill="none"><path d="M11.6 35.2 L4.5 37.4 L5.6 30.2 A18.6 17 0 1 1 11.6 35.2 Z" stroke="#1f2329" stroke-width="2.7" stroke-linejoin="round"/></svg>
<div class="t " style="left:2855.5px;top:1278.5px;font-size:31px;color:#181c25;">企信</div>
<div class="a" style="left:2480px;top:114px;width:235px;height:880px;background:#fff;border-radius:16px;box-shadow:0 4px 24px rgba(0,0,0,0.09)"></div>
<div class="t " style="left:2498px;top:147.0px;font-size:28.4px;color:#181c25;">转发</div>
<div class="t " style="left:2498px;top:217.38px;font-size:28.4px;color:#181c25;">日程</div>
<div class="t " style="left:2498px;top:287.76px;font-size:28.4px;color:#181c25;">提醒</div>
<div class="t " style="left:2498px;top:358.14px;font-size:28.4px;color:#181c25;">打印</div>
<div class="t " style="left:2498px;top:428.52px;font-size:28.4px;color:#181c25;">锁定</div>
<div class="t " style="left:2498px;top:498.9px;font-size:28.4px;color:#181c25;">复制</div>
<div class="t " style="left:2498px;top:569.28px;font-size:28.4px;color:#181c25;">更换合作伙伴</div>
<div class="t " style="left:2498px;top:639.66px;font-size:28.4px;color:#181c25;">更换外部负责人</div>
<div class="t " style="left:2498px;top:710.04px;font-size:28.4px;color:#181c25;">转换</div>
<div class="a" style="left:2480px;top:764px;width:235px;height:70px;background:#f2f4fb"></div>
<div class="t " style="left:2498px;top:780.42px;font-size:28.4px;color:#f28a2a;">快捷应收</div>
<div class="t " style="left:2498px;top:850.8px;font-size:28.4px;color:#181c25;">作废</div>
<div class="t " style="left:2498px;top:921.18px;font-size:28.4px;color:#181c25;">销售合同转订单</div>
<div class="a" style="left:2460px;top:752px;width:283px;height:88px;border:4px solid #e8342a;border-radius:3px"></div>
<div class="a" style="left:0px;top:1458.6px;width:2904px;height:2px;background:#1a1a1a"></div>
<div class="a" style="left:2902.4px;top:0px;width:2px;height:1460px;background:#1a1a1a"></div>
</body></html>
